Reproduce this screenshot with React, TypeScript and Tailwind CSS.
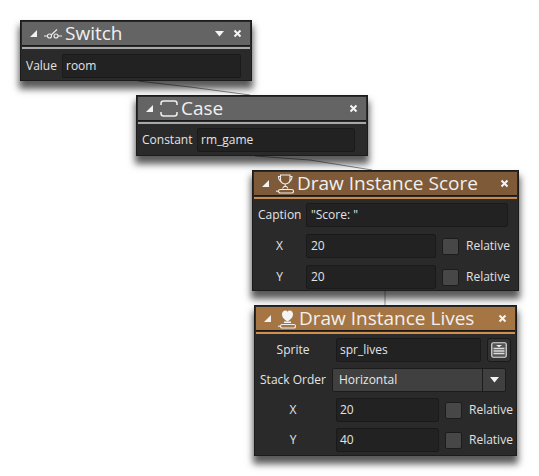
import React from "react";

const font = "font-['Open_Sans',sans-serif]";

function Collapse() {
  return (
    <svg width="9" height="9" viewBox="0 0 9 9" className="shrink-0">
      <path d="M8 1V8H1Z" fill="#f2f2f2" />
    </svg>
  );
}

function Close() {
  return (
    <svg width="9" height="9" viewBox="0 0 9 9" className="shrink-0">
      <path d="M1.5 1.5L7.5 7.5M7.5 1.5L1.5 7.5" stroke="#f4f4f4" strokeWidth="2" />
    </svg>
  );
}

function Menu() {
  return (
    <svg width="9" height="6" viewBox="0 0 9 6" className="shrink-0">
      <path d="M0 0H9L4.5 5.5Z" fill="#f4f4f4" />
    </svg>
  );
}

function SwitchIcon() {
  return (
    <svg width="18" height="12" viewBox="0 0 18 12" fill="none" stroke="#eee" strokeWidth="1.1">
      <path d="M0 8H3.5M14 8H18M7 7L13 1.5" />
      <circle cx="5.5" cy="8" r="2" />
      <circle cx="12" cy="8" r="2" />
    </svg>
  );
}

function CaseIcon() {
  return (
    <svg width="18" height="17" viewBox="0 0 18 17" fill="none" stroke="#eee" strokeWidth="1.5">
      <path d="M1 5V3.5Q1 1 3.5 1H14.5Q17 1 17 3.5V5M1 12V13.5Q1 16 3.5 16H14.5Q17 16 17 13.5V12" />
    </svg>
  );
}

function TrophyIcon() {
  return (
    <svg width="18" height="20" viewBox="0 0 18 20" fill="none" stroke="#eee" strokeWidth="1.1">
      <path d="M4.5 1H14V5.5Q14 9.5 9.2 10Q4.5 9.5 4.5 5.5ZM4.5 2.5H2.5Q2.5 6.5 5.5 7.5M14 2.5H16Q16 6.5 13 7.5M9.2 10V12.5M6.5 14.5L8 12.5H10.5L12 14.5" />
      <rect x="2.5" y="15.5" width="15" height="3.5" rx="1.7" />
      <path d="M0 17.2H2.5" />
    </svg>
  );
}

function HeartIcon() {
  return (
    <svg width="18" height="20" viewBox="0 0 18 20" fill="none">
      <path d="M9.5 12.5C5 9.5 4 7.5 4 5.2C4 3 5.6 1.5 7.4 1.5C8.3 1.5 9 2 9.5 2.8C10 2 10.8 1.5 11.7 1.5C13.5 1.5 15 3 15 5.2C15 7.5 14 9.5 9.5 12.5Z" fill="#f4f4f4" />
      <path d="M6 12.5H13V14H6Z" fill="#f4f4f4" />
      <rect x="2.5" y="15.5" width="15" height="3.5" rx="1.7" stroke="#eee" strokeWidth="1.1" />
      <path d="M0 17.2H2.5" stroke="#eee" strokeWidth="1.1" />
    </svg>
  );
}

function SpriteIcon() {
  return (
    <svg width="16" height="16" viewBox="0 0 16 16">
      <rect x="0.75" y="0.75" width="14.5" height="14.5" rx="1.5" fill="#555" stroke="#ddd" strokeWidth="1.2" />
      <path d="M5 3H11L8 5.2Z" fill="#eee" />
      <path d="M2.5 6.5H13.5M2.5 9H13.5M2.5 11.5H13.5" stroke="#ddd" strokeWidth="1.4" />
    </svg>
  );
}

function Field({ value, className }: { value: string; className: string }) {
  return (
    <div className={`h-[24px] flex items-center pl-1 bg-[#222222] border border-[#1a1a1a] rounded-[2px] text-[12px] text-[#e4e4e4] ${className}`}>
      {value}
    </div>
  );
}

function Label({ text, className }: { text: string; className: string }) {
  return <div className={`text-[12px] text-[#e4e4e4] text-center shrink-0 ${className}`}>{text}</div>;
}

function Relative() {
  return (
    <div className="flex items-center gap-[7px]">
      <div className="w-[17px] h-[17px] bg-[#474747] border border-[#1c1c1c] rounded-[2px]" />
      <span className="text-[12px] text-[#e0e0e0]">Relative</span>
    </div>
  );
}

function Panel({
  pos,
  title,
  icon,
  head,
  bar,
  menu,
  children,
}: {
  pos: string;
  title: string;
  icon: React.ReactNode;
  head: string;
  bar: string;
  menu?: boolean;
  children: React.ReactNode;
}) {
  return (
    <div className={`absolute ${pos} bg-[#2a2a2a] border border-[#1c1c1c] shadow-[0_7px_7px_1px_rgba(0,0,0,0.65)]`}>
      <div className={`h-[24px] mx-[1px] mt-[1px] flex items-center pl-[7px] pr-[8px] border-b border-[#1a1a1a] ${head}`}>
        <Collapse />
        <div className="ml-[5px] w-[19px] flex justify-center">{icon}</div>
        <div className="ml-[3px] text-[19px] leading-none text-[#f0f0f0] whitespace-nowrap">{title}</div>
        <div className="ml-auto flex items-center gap-[9px]">
          {menu && <Menu />}
          <Close />
        </div>
      </div>
      <div className={`h-[2px] mt-[1px] mx-[1px] ${bar}`} />
      {children}
    </div>
  );
}

export default function App() {
  return (
    <div className={`relative w-[539px] h-[476px] bg-white overflow-hidden ${font}`}>
      {/* connector wires */}
      <svg width="539" height="476" className="absolute left-0 top-0">
        <path d="M138 81L190 87L250 95" fill="none" stroke="#8a8a8a" strokeWidth="1" />
        <path d="M255 156L310 160L372 170" fill="none" stroke="#8a8a8a" strokeWidth="1" />
        <path d="M385 291V305" fill="none" stroke="#9a9a9a" strokeWidth="1" />
      </svg>

      <Panel pos="left-[20px] top-[20px] w-[232px] h-[61px]" title="Switch" icon={<SwitchIcon />} head="bg-[#646464]" bar="bg-[#a8a8a8]" menu>
        <div className="flex items-center mt-[5px] pl-[5px]">
          <Label text="Value" className="w-[31px]" />
          <Field value="room" className="ml-[5px] w-[179px] pl-[3px]" />
        </div>
      </Panel>

      <Panel pos="left-[136px] top-[95px] w-[232px] h-[61px]" title="Case" icon={<CaseIcon />} head="bg-[#646464]" bar="bg-[#a8a8a8]">
        <div className="flex items-center mt-[4px] pl-[5px]">
          <Label text="Constant" className="w-[50px]" />
          <Field value="rm_game" className="ml-[5px] w-[158px] pl-[3px]" />
        </div>
      </Panel>

      <Panel pos="left-[252px] top-[170px] w-[267px] h-[121px]" title="Draw Instance Score" icon={<TrophyIcon />} head="bg-[#7e5a38]" bar="bg-[#c98a4b]">
        <div className="flex flex-col gap-[7px] mt-[4px] pl-[5px]">
          <div className="flex items-center">
            <Label text="Caption" className="w-[43px]" />
            <Field value={'"Score: "'} className="ml-[5px] w-[202px]" />
          </div>
          <div className="flex items-center">
            <Label text="X" className="w-[43px]" />
            <Field value="20" className="ml-[5px] w-[130px] mr-[6px]" />
            <Relative />
          </div>
          <div className="flex items-center">
            <Label text="Y" className="w-[43px]" />
            <Field value="20" className="ml-[5px] w-[130px] mr-[6px]" />
            <Relative />
          </div>
        </div>
      </Panel>

      <Panel pos="left-[254px] top-[305px] w-[263px] h-[151px]" title="Draw Instance Lives" icon={<HeartIcon />} head="bg-[#a57644]" bar="bg-[#d2904f]">
        <div className="flex flex-col gap-[6px] mt-[4px] pl-[5px]">
          <div className="flex items-center">
            <Label text="Sprite" className="w-[66px]" />
            <Field value="spr_lives" className="ml-[10px] w-[145px] pl-[3px]" />
            <div className="ml-[6px] w-[24px] h-[24px] flex items-center justify-center bg-[#333333] border border-[#1a1a1a] rounded-[3px]">
              <SpriteIcon />
            </div>
          </div>
          <div className="flex items-center">
            <Label text="Stack Order" className="w-[66px]" />
            <div className="ml-[6px] w-[174px] h-[24px] flex bg-[#404040] border border-[#1c1c1c] rounded-[2px] text-[12px] text-[#e8e8e8]" style={{ marginLeft: 6 }}>
              <div className="flex-1 flex items-center pl-[6px] border-r border-[#1c1c1c]">Horizontal</div>
              <div className="w-[22px] flex items-center justify-center">
                <Menu />
              </div>
            </div>
          </div>
          <div className="flex items-center">
            <Label text="X" className="w-[66px]" />
            <Field value="20" className="ml-[10px] w-[103px] mr-[6px] pl-[3px]" />
            <Relative />
          </div>
          <div className="flex items-center">
            <Label text="Y" className="w-[66px]" />
            <Field value="40" className="ml-[10px] w-[103px] mr-[6px] pl-[3px]" />
            <Relative />
          </div>
        </div>
      </Panel>
    </div>
  );
}
